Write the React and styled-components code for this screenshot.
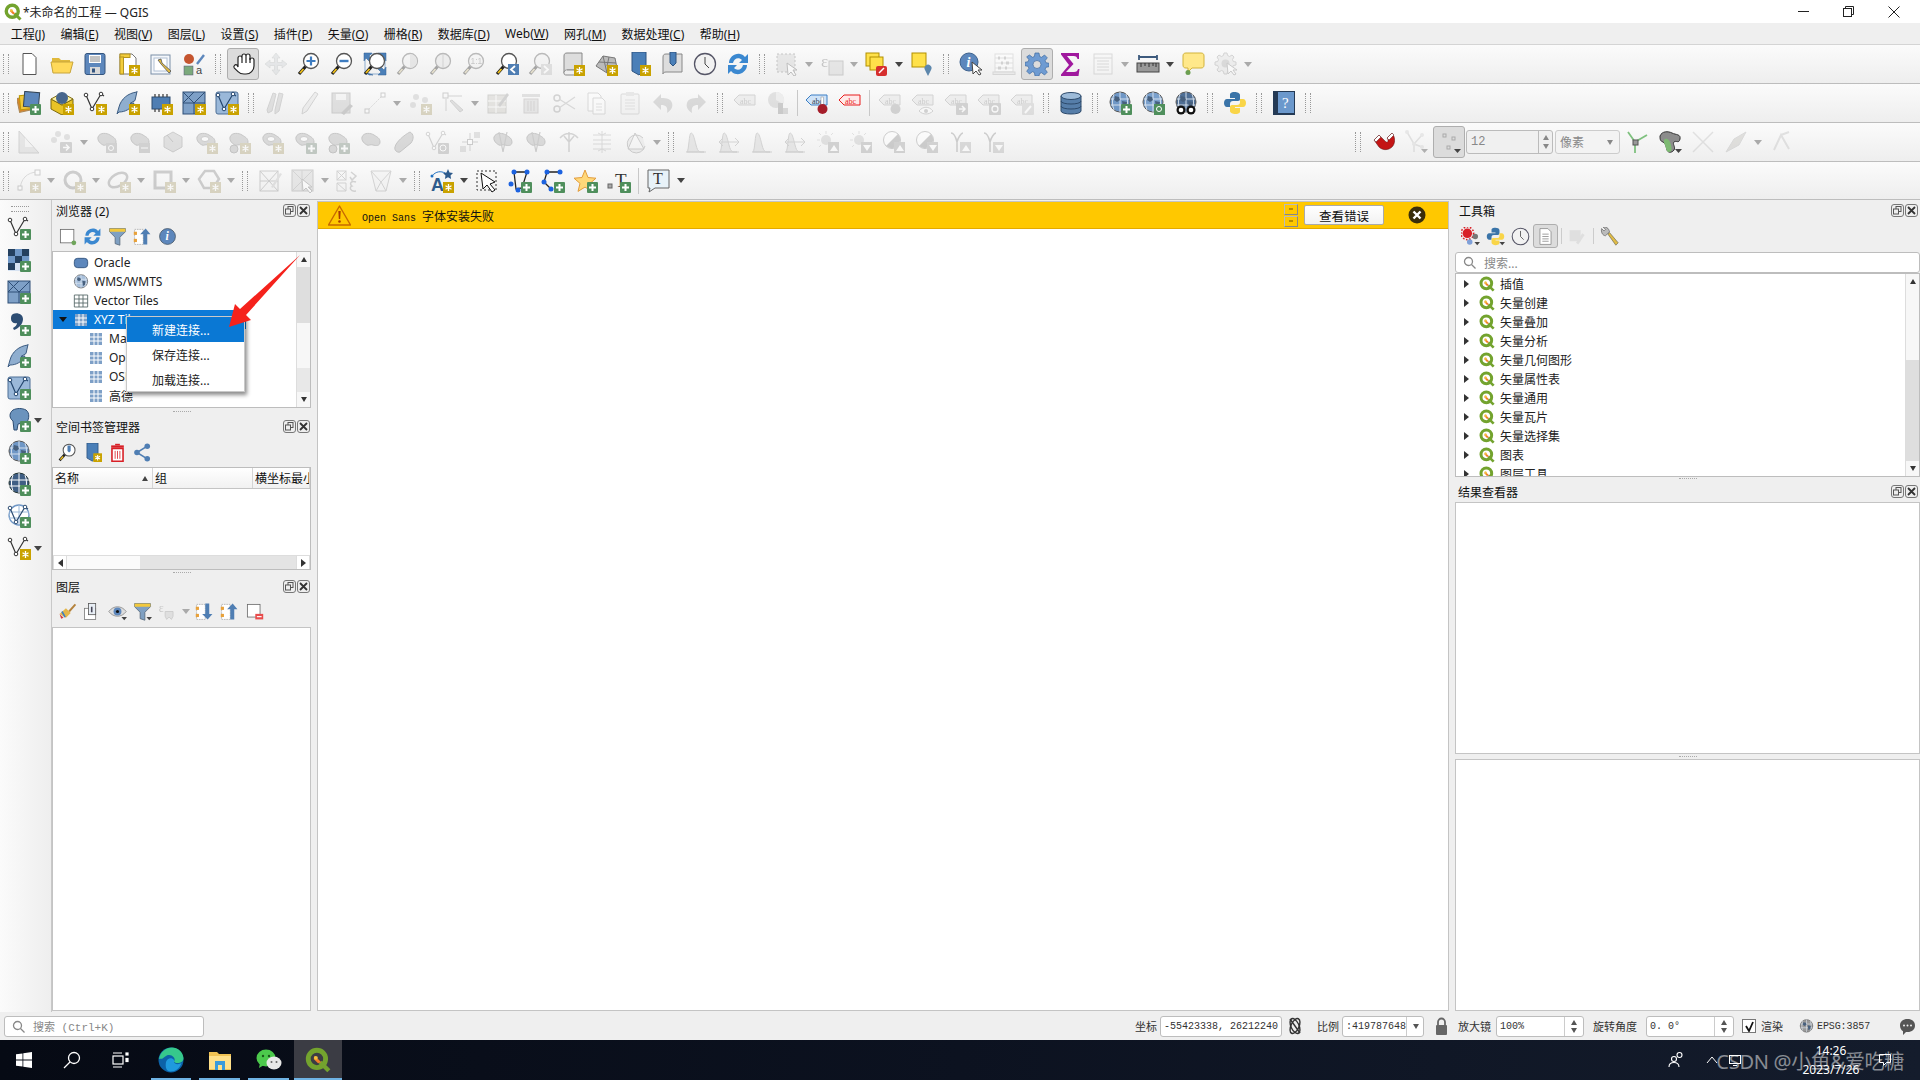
import styled, { createGlobalStyle } from 'styled-components'

const Global = createGlobalStyle`
  html, body { margin: 0; padding: 0; background: #efefef; overflow: hidden; }
  body { font-family: "Noto Sans", "Noto Sans CJK SC", sans-serif; font-size: 12px; color: #111; }
  * { box-sizing: border-box; }
`

const Lens = ({ fill = '#fff', children }) => (
  <>
    <line x1="9" y1="14" x2="2" y2="22" stroke="#222" strokeWidth="3.2" />
    <line x1="6.5" y1="17" x2="3" y2="21" stroke="#f2c21a" strokeWidth="1.8" />
    <circle cx="14" cy="9" r="7.5" fill={fill} stroke="#555" strokeWidth="1.3" />
    {children}
  </>
)
const Globe = ({ c = '#6f97c6' }) => (
  <>
    <circle cx="12" cy="11" r="10" fill={c} stroke="#555" />
    <path d="M2.5 8h19M2.5 14h19M12 1v20M6 3c-2 5-2 11 0 16M18 3c2 5 2 11 0 16" fill="none" stroke="#dfe8f2" strokeWidth=".9" />
    <path d="M7 5l4 1 1 3-3 2-3-2zM14 10l5 1-1 5-3 2z" fill="#47607e" />
  </>
)
const Blob = ({ c = '#aaa' }) => <path d="M3 7c2-5 9-4 12-2s6 3 6 7-4 4-7 3-4 1-6 0-6-4-5-8z" fill={c} stroke="#777" />
const Tag = ({ c = '#ddd', s = '#999', t = '#888' }) => (
  <>
    <path d="M1 9l5-5h16v10H6z" fill={c} stroke={s} />
    <text x="7" y="12.5" fontSize="8" fontFamily="Liberation Serif, serif" fill={t}>abc</text>
  </>
)
const Vee = ({ c = '#333' }) => (
  <>
    <path d="M3 4l6 14L18 3l3 2" fill="none" stroke={c} strokeWidth="1.2" />
    <circle cx="3" cy="4" r="1.8" fill="#fff" stroke={c} />
    <circle cx="9" cy="18" r="1.8" fill="#fff" stroke={c} />
    <circle cx="18" cy="3" r="1.8" fill="#fff" stroke={c} />
  </>
)
const Hist = () => <path d="M2 22h20M3 22c2-2 2-19 4-19s3 4 5 12 4 7 8 7z" fill="#ccc" stroke="#999" />
const Bub = ({ up }) => <path d={up ? 'M14 21l4-6 4 6z' : 'M14 15l4 6 4-6z'} fill="#fff" />

const S = {
  doc: <path d="M6 1.5h9l4 4v17H6z" fill="#fff" stroke="#555" />,
  folder: <><path d="M2 6h7l2 2h9v3H2z" fill="#e0b93c" /><path d="M1 10h22l-3 11H3z" fill="#ffd95a" stroke="#c8a53a" /></>,
  save: <><rect x="2" y="1.5" width="20" height="21" rx="2" fill="#5d87bc" stroke="#34557f" /><rect x="6" y="3" width="12" height="8" fill="#fff" /><path d="M7 5h10M7 7h10M7 9h10" stroke="#888" /><rect x="7" y="15" width="10" height="7" fill="#d9d9d9" /><rect x="9" y="16.5" width="3" height="4" fill="#34557f" /></>,
  layout: <><path d="M4 2h12l4 4v16H4z" fill="#fff" stroke="#777" /><rect x="4" y="2" width="10" height="3.5" fill="#f2cd3c" stroke="#b5941f" /><rect x="4" y="5" width="3.5" height="17" fill="#f2cd3c" stroke="#b5941f" /></>,
  props: <><rect x="2" y="3" width="19" height="19" fill="#f4f7fb" stroke="#7b8fa8" /><rect x="5" y="6" width="13" height="13" fill="#fff" stroke="#b0c0d4" /><path d="M9 8l3 4 8 9 2-2-9-8-1-4z" fill="#e4bd41" stroke="#555" strokeWidth=".8" /></>,
  style: <><circle cx="7" cy="7" r="5" fill="#c5552f" /><path d="M15 12l7-9" stroke="#5d87bc" strokeWidth="2.4" /><rect x="2" y="14" width="9" height="9" fill="#7ba97c" stroke="#557" strokeWidth=".5" /><text x="14" y="22" fontSize="11" fontFamily="Liberation Sans, sans-serif" fill="#444">a</text></>,
  hand: <g transform="translate(1 0)" fill="#fff" stroke="#222" strokeWidth="1.2"><path d="M18 8a2 2 0 1 1 4 0v6a8 8 0 0 1-8 8h-2c-2.8 0-4.5-.86-5.99-2.34l-3.6-3.6a2 2 0 0 1 2.83-2.82L6 15V6a2 2 0 1 1 4 0V4a2 2 0 1 1 4 0 2 2 0 1 1 4 0z" /><path d="M10 6v5M14 4v7M18 6v5" fill="none" /></g>,
  panmap: <path d="M12 1l4 5h-2.5v4.5H18V8l5 4-5 4v-2.5h-4.500V18H16l-4 5-4-5h2.500v-4.500H6V16l-5-4 5-4v2.500h4.500V6H8z" fill="#c3d0da" stroke="#9aa" strokeWidth=".6" />,
  zoomin: <Lens><path d="M14 4.500v9M9.500 9h9" stroke="#3e7cc0" strokeWidth="2.200" /></Lens>,
  zoomout: <Lens><path d="M9.500 9h9" stroke="#3e7cc0" strokeWidth="2.400" /></Lens>,
  full: <><path d="M1 1h8L6 4l3 3-3 2-3-3-2 3zM23 1h-8l3 3-3 3 3 2 3-3 2 3zM23 23h-8l3-3-3-3 3-2 3 3 2-3zM10 23H6l-2-2z" fill="#4a7fb8" stroke="#2d5b8e" strokeWidth=".5" /><rect x="2" y="2" width="20" height="20" fill="none" stroke="#4a7fb8" strokeWidth=".6" /><Lens fill="#fff" /></>,
  zoomsel: <Lens fill="#eee"><path d="M14 2a7 7 0 0 1 0 14z" fill="#ccc" /></Lens>,
  zoomlayer: <Lens fill="#ddd"><path d="M14 2v14" stroke="#999" /></Lens>,
  zoomone: <Lens fill="#eee"><text x="8.500" y="12" fontSize="8.500" fontFamily="Liberation Sans, sans-serif" fill="#777">1:1</text></Lens>,
  zoomlast: <><Lens fill="#fff" /><rect x="13" y="12" width="11" height="11" fill="#4f7eb3" /><path d="M20 14l-4 3.500 4 3.500" fill="none" stroke="#fff" strokeWidth="1.800" /></>,
  zoomnext: <><Lens fill="#eee" /><rect x="13" y="12" width="11" height="11" fill="#bbb" /><path d="M16 14l4 3.500-4 3.500" fill="none" stroke="#fff" strokeWidth="1.800" /></>,
  map: <><path d="M6 1h15v17H6c-2 0-3 1-3 3V4c0-2 1-3 3-3z" fill="#ddd" stroke="#888" /><path d="M3 21c0 2 1 2 3 2h13v-5H6" fill="#eee" stroke="#888" /></>,
  map3d: <path d="M2 14L9 4l12 2 2 10-10 5zM9 4l4 17M5 10l17 1M15 5l-2 9" fill="#bbb" stroke="#777" />,
  bookmark: <path d="M5 0h14v16l-7 7-7-4z" fill="#4a7fb8" stroke="#2e5480" />,
  bookshow: <><path d="M6 2h16v18H6c-2 0-3 1-3 2V5c0-2 1-3 3-3z" fill="#ddd" stroke="#888" /><path d="M10 0h6v11l-3 3-3-3z" fill="#4a7fb8" stroke="#2e5480" /></>,
  clock: <><circle cx="12" cy="12" r="10.500" fill="#f2f2f2" stroke="#556" strokeWidth="1.300" /><path d="M12 5v7l4 4" fill="none" stroke="#444" /></>,
  refresh: <><path d="M3 11C3 5 9 1 14 2c3 .5 4 2 5 3l3-3v9h-9l3-3c-3-3-8-2-9 3z" fill="#3b88d0" /><path d="M21 13c0 6-6 10-11 9-3-.5-4-2-5-3l-3 3v-9h9l-3 3c3 3 8 2 9-3z" fill="#3b88d0" /></>,
  select: <><rect x="2" y="2" width="18" height="18" fill="#ccc" stroke="#777" strokeDasharray="2 2" /><path d="M12 11l1 12 3-3 3 4 2-1-3-5h4z" fill="#fff" stroke="#666" /></>,
  expr: <><rect x="9" y="9" width="14" height="14" fill="#ccc" stroke="#888" /><text x="1" y="15" fontSize="17" fontFamily="Liberation Serif, serif" fill="#777">ε</text></>,
  deselect: <><rect x="1" y="1" width="13" height="13" fill="#ffe14a" stroke="#b28f00" /><rect x="5" y="5" width="13" height="13" fill="#ffe14a" stroke="#b28f00" /><rect x="11" y="14" width="11" height="10" rx="2" fill="#d62f2f" /><path d="M14 21l5-5" stroke="#fff" strokeWidth="1.500" /></>,
  yellowpin: <><rect x="2" y="1" width="14" height="14" fill="#ffe14a" stroke="#b28f00" /><path d="M18 24l-3-6a3.500 3.500 0 1 1 6 0z" fill="#5d87ac" /></>,
  identify: <><circle cx="10" cy="10" r="9" fill="#5d87bc" stroke="#3d618d" /><text x="7.500" y="15" fontSize="14" fontStyle="italic" fontFamily="Liberation Serif, serif" fontWeight="700" fill="#fff">i</text><path d="M13 10l1 12 3-3 3 4 2-1-3-4h4z" fill="#fff" stroke="#444" /></>,
  abacus: <><rect x="3" y="2" width="18" height="18" fill="#fff" stroke="#bbb" /><path d="M3 6h18M3 11h18M3 16h18" stroke="#bbb" /><path d="M6 6h2M12 6h2M9 11h2M14 11h3M6 16h3M13 16h2" stroke="#999" strokeWidth="3" /><rect x="1" y="20" width="22" height="2.500" fill="#ddd" stroke="#aaa" /></>,
  gear: <path fillRule="evenodd" d="M10 1h4l.6 3.500 2 .8L19.500 3l2.800 2.800-2.200 2.900.8 2 3.100.6v3.400l-3.100.6-.8 2 2.200 2.900-2.800 2.800-2.900-2.300-2 .8L14 24h-4l-.6-3.500-2-.8L4.500 22l-2.800-2.800 2.200-2.900-.8-2-3.100-.6v-3.400l3.100-.6.8-2-2.200-2.900L4.500 3l2.900 2.300 2-.8zM12 8.500a4 4 0 1 0 0 8 4 4 0 0 0 0-8z" fill="#6e9bd2" stroke="#3e6aa0" strokeWidth=".7" />,
  sigma: <path d="M3 1h18v6h-1.500c-.5-2-1.500-3-4-3H9l6.500 8L8 20h8c2.500 0 3.500-1 4-3H21.500l-1 7H3v-1.500L11 13 3 2.500z" fill="#a0199e" />,
  table: <><rect x="3" y="2" width="18" height="20" fill="#f5f5f5" stroke="#aaa" /><path d="M3 6h18M6 9h12M6 12h12M6 15h12M6 18h12" stroke="#aaa" /></>,
  measure: <><path d="M3 3v5M21 3v5M3 5h18" stroke="#3d5a7d" strokeWidth="1.800" /><rect x="1" y="11" width="22" height="9" fill="#999" stroke="#444" /><path d="M5 11v4M9 11v3M13 11v4M17 11v3M20 11v4" stroke="#333" /></>,
  tip: <><path d="M5 1h15c2 0 3 1 3 3v9c0 2-1 3-3 3H11l-4 4v-4H5c-2 0-3-1-3-3V4c0-2 1-3 3-3z" fill="#ffe88a" stroke="#d2b33b" /><circle cx="7" cy="20.500" r="2.500" fill="#6b9e50" /></>,
  gearcur: <><path d="M10 1h3l.6 2.500 2 1L18 3l2 2-1.500 2.500.8 2 2.700.5v3l-2.700.5-.8 2L20 18l-2 2-2.400-1.500-2 .8-.6 2.700h-3l-.6-2.700-2-.8L5 20l-2-2 1.500-2.500-.8-2L1 13v-3l2.700-.5.8-2L3 5l2-2 2.400 1.500 2-1z" fill="#ddd" stroke="#999" /><circle cx="11.500" cy="11.500" r="4" fill="#aaa" /><path d="M13 11l1 11 3-3 3 4 2-1-3-4h4z" fill="#fff" stroke="#888" /></>,
  addlayer: <><rect x="1" y="6" width="14" height="14" transform="rotate(-12 8 13)" fill="#d8862e" stroke="#a85" /><rect x="3" y="4" width="14" height="14" transform="rotate(-6 10 11)" fill="#f2c83c" stroke="#b90" /><rect x="7" y="1" width="15" height="15" transform="rotate(5 14 9)" fill="#5d87bc" stroke="#345" /></>,
  gpkg: <><path d="M1 8l11 6 11-6v10l-11 6-11-6z" fill="#e8c326" stroke="#7d6a10" /><path d="M1 8l11-6 11 6-11 6z" fill="#fff3a4" stroke="#7d6a10" /><circle cx="12" cy="7" r="6" fill="#47668d" /></>,
  vnew: <Vee />,
  feather: <path d="M21 1C12 2 5 8 3 16l-2 7 2-2c6 0 12-3 15-9l-4 .5 5-3 2-9z" fill="#8faecf" stroke="#3c5c82" />,
  chip: <><rect x="3" y="6" width="18" height="12" fill="#4f7eb3" stroke="#2c4a6e" /><path d="M6 3v3M10 3v3M14 3v3M18 3v3M6 18v3M10 18v3M14 18v3M18 18v3" stroke="#444" strokeWidth="1.300" /></>,
  mesh: <><rect x="1" y="1" width="22" height="22" fill="#7ea0c7" stroke="#2f4f76" /><path d="M1 1l11 11L23 1M1 12h22M12 12v11M1 12L12 1" fill="none" stroke="#2f4f76" /></>,
  vtile: <><rect x="1" y="1" width="22" height="22" rx="2" fill="#9ab8d9" stroke="#4d6f96" /><Vee c="#24466e" /></>,
  pencils: <path d="M9 2l3 1-4 17-4 2-1-3zM15 2l4 1-4 17-4 3v-4z" fill="#bbb" stroke="#999" />,
  pencil: <path d="M18 1l3 2L10 20l-5 3 1-6z" fill="#ddd" stroke="#999" />,
  saveedit: <><rect x="2" y="2" width="18" height="20" fill="#bbb" stroke="#888" /><rect x="6" y="3" width="10" height="6" fill="#eee" /><path d="M11 22l9-9 3 2-9 9z" fill="#888" /></>,
  line: <><path d="M4 20L20 4" stroke="#aaa" strokeDasharray="2 1" /><rect x="2" y="18" width="4" height="4" fill="#fff" stroke="#888" /><rect x="18" y="2" width="4" height="4" fill="#fff" stroke="#888" /></>,
  points: <><circle cx="8" cy="6" r="3" fill="#bbb" /><circle cx="17" cy="9" r="3" fill="#bbb" /><circle cx="5" cy="14" r="3" fill="#bbb" /></>,
  nodetool: <><rect x="2" y="2" width="5" height="5" fill="none" stroke="#888" /><path d="M7 5h14M5 8v12M9 10l10 11 3-2-11-10z" fill="#bbb" stroke="#999" /></>,
  tableedit: <><rect x="2" y="4" width="18" height="18" fill="#ccc5ad" stroke="#998" /><path d="M2 10h18M2 16h18M10 4v18" stroke="#fff" /><path d="M12 14L21 2l2 2-9 12z" fill="#999" /></>,
  trash: <><rect x="3" y="3" width="18" height="3" fill="#bbb" /><rect x="5" y="8" width="14" height="14" fill="#ccc" stroke="#a99" /><path d="M9 10v10M12 10v10M15 10v10" stroke="#a99" /></>,
  scissors: <><circle cx="5" cy="18" r="3" fill="none" stroke="#999" strokeWidth="1.500" /><circle cx="5" cy="7" r="3" fill="none" stroke="#999" strokeWidth="1.500" /><path d="M7 8l16 10M7 17L23 6" stroke="#aaa" strokeWidth="1.300" /></>,
  copy: <><path d="M3 2h10l3 3v15H3z" fill="#fff" stroke="#aaa" /><path d="M8 7h9l3 3v13H8z" fill="#fff" stroke="#aaa" /><path d="M11 13h6M11 16h6M11 19h6" stroke="#bbb" /></>,
  paste: <><rect x="3" y="3" width="18" height="20" rx="1" fill="#eee" stroke="#aaa" /><rect x="8" y="1" width="8" height="4" fill="#ccc" /><path d="M7 9h10M7 12h10M7 15h10M7 18h10" stroke="#bbb" /></>,
  undo: <path d="M10 3L2 11l8 8v-5c5 0 7 2 6 8 5-3 6-7 5-10-1-4-5-5-11-5z" fill="#aaa" />,
  redo: <path d="M14 3l8 8-8 8v-5c-5 0-7 2-6 8-5-3-6-7-5-10 1-4 5-5 11-5z" fill="#aaa" />,
  abc: <Tag />,
  pie: <><circle cx="10" cy="9" r="8" fill="#bbb" /><path d="M10 1v8l7 4A8 8 0 0 0 10 1z" fill="#ddd" /><rect x="12" y="12" width="5" height="11" fill="#888" /><rect x="17" y="17" width="5" height="6" fill="#aaa" /></>,
  labelpin: <><Tag c="#cfe3f8" s="#3c7fc4" t="#345" /><rect x="16" y="6" width="2.500" height="10" fill="#fff" stroke="#888" strokeWidth=".5" /><circle cx="17.500" cy="18" r="5" fill="#a51d2a" /></>,
  labelred: <Tag c="#ffe9e9" s="#e81d1d" t="#e81d1d" />,
  abcpin: <><Tag /><circle cx="17.500" cy="18" r="5" fill="#999" /></>,
  abceye: <><Tag /><path d="M8 20c4-5 10-5 14 0-4 4-10 4-14 0z" fill="#fff" stroke="#999" /><circle cx="15" cy="20" r="2" fill="#999" /></>,
  abcmove: <><Tag /><rect x="12" y="12" width="12" height="12" rx="1" fill="#999" /><path d="M15 18h6M18 15l3 3-3 3" stroke="#fff" fill="none" strokeWidth="1.500" /></>,
  abcrot: <><Tag /><rect x="12" y="12" width="12" height="12" rx="1" fill="#999" /><circle cx="18" cy="18" r="3" fill="none" stroke="#fff" strokeWidth="1.300" /></>,
  abcedit: <><Tag /><rect x="12" y="12" width="12" height="12" rx="1" fill="#bbb" /><path d="M15 22l6-7" stroke="#fff" strokeWidth="2" /></>,
  db: <><path d="M2 5v15c0 4 20 4 20 0V5z" fill="#567ea9" stroke="#2d4a6b" /><ellipse cx="12" cy="5" rx="10" ry="3.500" fill="#9dbbd9" stroke="#2d4a6b" /><path d="M2 10c0 4 20 4 20 0M2 15c0 4 20 4 20 0" fill="none" stroke="#2d4a6b" /></>,
  globe: <Globe />,
  globe2: <Globe c="#7aa0cc" />,
  globedark: <><Globe c="#4f6f96" /><circle cx="7" cy="19" r="4.500" fill="#111" /><circle cx="17" cy="19" r="4.500" fill="#111" /><circle cx="7" cy="19" r="2.300" fill="#fff" /><circle cx="17" cy="19" r="2.300" fill="#fff" /></>,
  python: <><path d="M12 1c-5 0-5 2-5 3v3h5v1H4c-2 0-3 2-3 4s1 4 3 4h3v-3c0-2 1-3 3-3h5c1.500 0 2-1 2-2V4c0-2-3-3-5-3z" fill="#3a74a8" /><path d="M12 23c5 0 5-2 5-3v-3h-5v-1h8c2 0 3-2 3-4s-1-4-3-4h-3v3c0 2-1 3-3 3H9c-1.500 0-2 1-2 2v4c0 2 3 3 5 3z" fill="#f9d548" /></>,
  help: <><rect x="1" y="0" width="22" height="24" fill="#243a55" /><rect x="6" y="1" width="16" height="21" fill="#6b98cc" /><text x="10" y="17" fontSize="15" fontFamily="Liberation Serif, serif" fill="#fff">?</text></>,
  ruler: <><path d="M2 23V1l20 22z" fill="#ccc" stroke="#999" /><path d="M16 17l-8-9v9z" fill="#f1f1f1" /></>,
  ptsmove: <><circle cx="8" cy="4" r="3" fill="#bbb" /><circle cx="17" cy="7" r="3" fill="#bbb" /><circle cx="4" cy="10" r="3" fill="#bbb" /><rect x="10" y="12" width="12" height="11" rx="1" fill="#999" /><path d="M13 17.500h6M16 14.500l3 3-3 3" stroke="#fff" fill="none" strokeWidth="1.500" /></>,
  blobrot: <><Blob /><rect x="11" y="13" width="11" height="10" fill="#999" /><circle cx="16" cy="18" r="2.500" fill="none" stroke="#fff" /></>,
  blobmove: <><Blob /><rect x="11" y="13" width="11" height="10" fill="#999" /><path d="M13 18h7" stroke="#fff" /></>,
  hex: <><path d="M12 2l9 5v10l-9 5-9-5V7z" fill="#bbb" stroke="#888" /><path d="M12 12l-6-7" stroke="#777" /></>,
  ringhole: <><Blob /><ellipse cx="11" cy="9" rx="4" ry="2.500" fill="#fff" stroke="#888" /></>,
  twoblob: <><Blob /><circle cx="7" cy="19" r="4" fill="#aaa" stroke="#777" /></>,
  blob: <Blob />,
  blobfill: <path d="M18 2c4 2 4 7 1 11L8 22c-3 1-6-2-5-5 1-5 9-12 15-15z" fill="#aaa" stroke="#777" />,
  vrot: <><Vee c="#999" /><rect x="13" y="13" width="11" height="11" rx="1" fill="#999" /><circle cx="18" cy="18" r="3" fill="none" stroke="#fff" /></>,
  split: <><path d="M4 12h16M12 3v18" stroke="#999" /><rect x="9.500" y="9.500" width="5" height="5" fill="#fff" stroke="#888" /><rect x="16" y="2" width="6" height="6" fill="#bbb" /><rect x="2" y="16" width="6" height="6" fill="#bbb" /></>,
  sciss: <><Blob /><path d="M8 2l4 20M16 2l-4 20" stroke="#888" strokeWidth="1.200" /></>,
  scissline: <path d="M3 8c5-6 13-6 18 0M12 2v20M7 6l5 6M17 6l-5 6" fill="none" stroke="#999" strokeWidth="1.500" />,
  merge: <path d="M3 5h18M3 10h18M3 14h18M3 19h18M12 1v22M8 3l4 2 4-2M8 21l4-2 4 2" fill="none" stroke="#aaa" />,
  rotcirc: <path d="M12 3l9 16H5zM20 8a9 9 0 1 0 2 8" fill="#ddd" stroke="#888" />,
  hist: <Hist />,
  hist2: <><Hist /><path d="M2 12h20M6 8l-4 4 4 4M18 8l4 4-4 4" fill="none" stroke="#999" /></>,
  sunup: <><circle cx="10" cy="10" r="5" fill="#bbb" /><path d="M10 1v3M1 10h3M3 3l2 2M17 3l-2 2M3 17l2-2" stroke="#bbb" /><rect x="12" y="12" width="11" height="11" fill="#999" /><Bub up /></>,
  sundown: <><circle cx="10" cy="10" r="5" fill="#bbb" /><path d="M10 1v3M1 10h3M3 3l2 2M17 3l-2 2M3 17l2-2" stroke="#bbb" /><rect x="12" y="12" width="11" height="11" fill="#999" /><Bub /></>,
  contup: <><circle cx="10" cy="10" r="8.500" fill="#fff" stroke="#888" /><path d="M16 4A8.500 8.500 0 0 1 4 16z" fill="#888" /><rect x="12" y="12" width="11" height="11" fill="#999" /><Bub up /></>,
  contdown: <><circle cx="10" cy="10" r="8.500" fill="#fff" stroke="#888" /><path d="M16 4A8.500 8.500 0 0 1 4 16z" fill="#888" /><rect x="12" y="12" width="11" height="11" fill="#999" /><Bub /></>,
  gamup: <><path d="M3 3c3 0 5 5 6 9v10M15 3c-2 0-5 5-6 9" fill="none" stroke="#888" strokeWidth="1.500" /><rect x="12" y="12" width="11" height="11" fill="#aaa" /><Bub up /></>,
  gamdown: <><path d="M3 3c3 0 5 5 6 9v10M15 3c-2 0-5 5-6 9" fill="none" stroke="#888" strokeWidth="1.500" /><rect x="12" y="12" width="11" height="11" fill="#aaa" /><Bub /></>,
  magnet: <><path d="M3 10l5-5 6 6c2 2 3 1 3 0s0-2-1-3l5-5c4 5 3 11 0 14s-9 4-13 0z" fill="#c41515" stroke="#511" strokeWidth=".5" /><path d="M3 10l5-5 2 2-5 5zM16 8l5-5 2 2-5 5z" fill="#fff" stroke="#511" strokeWidth=".5" /></>,
  snap: <><path d="M3 2l7 12 8-9M10 14l8 3M10 14v8" fill="none" stroke="#bbb" strokeWidth="1.500" /><circle cx="3" cy="2" r="2" fill="#ccc" /><circle cx="18" cy="5" r="2" fill="#ccc" /><circle cx="18" cy="17" r="2" fill="#ccc" /><circle cx="10" cy="14" r="2" fill="#ccc" /></>,
  snapdots: <><rect x="6" y="4" width="3" height="3" fill="none" stroke="#aaa" /><rect x="15" y="7" width="3" height="3" fill="none" stroke="#aaa" /><rect x="10" y="16" width="3" height="3" fill="none" stroke="#aaa" /></>,
  trace: <><path d="M3 2l7 10M22 5l-12 7M10 12v11" stroke="#7fc17f" strokeWidth="1.800" /><rect x="8" y="10" width="5" height="5" fill="#999" stroke="#555" /></>,
  tracefill: <><path d="M2 6c2-5 8-5 12-3s9 1 8 6-4 1-6 3 2 5 0 8-6 3-7 0-1-7-4-8-3-3-3-6z" fill="#8c8c8c" stroke="#333" /><path d="M7 9c3-1 5 2 6 6s1 7-2 7-3-5-4-7-2-5 0-6z" fill="#7dba72" /></>,
  cross: <path d="M2 2l20 20M22 2L2 22" stroke="#bbb" strokeWidth="1.500" />,
  crossfill: <path d="M2 22L10 9 22 2l-7 13z" fill="#bdb8a4" stroke="#aaa" />,
  nodeline: <path d="M5 20L12 5l8 14M12 5l8-3" fill="none" stroke="#bbb" strokeWidth="2" />,
  curve: <><path d="M3 22C3 10 10 3 21 3" fill="none" stroke="#aaa" /><rect x="1" y="17" width="4" height="4" fill="#fff" stroke="#888" /><rect x="18" y="1" width="5" height="5" fill="#fff" stroke="#888" /></>,
  circ: <circle cx="11" cy="11" r="8" fill="none" stroke="#888" strokeWidth="3" />,
  ell: <ellipse cx="11" cy="11" rx="10" ry="6" fill="none" stroke="#888" strokeWidth="2.500" transform="rotate(-30 11 11)" />,
  rect: <rect x="3" y="3" width="16" height="16" fill="none" stroke="#888" strokeWidth="3" />,
  poly: <path d="M8 2h9l5 8-6 9H7L2 10z" fill="none" stroke="#888" strokeWidth="2.500" />,
  meshedit: <><rect x="2" y="2" width="18" height="20" fill="#eee" stroke="#888" /><path d="M2 2l18 20M20 2L2 22M2 12h18" stroke="#888" /><path d="M13 18L22 4l2 1-9 14z" fill="#bbb" /></>,
  meshsel: <><rect x="1" y="1" width="21" height="21" fill="#ccc" stroke="#888" /><path d="M1 1l21 21M22 1L1 22M11 1v21" stroke="#999" /><path d="M11 10l1 12 3-3 4 5 2-2-4-4h4z" fill="#fff" stroke="#777" /></>,
  meshexpr: <><rect x="1" y="2" width="9" height="9" fill="none" stroke="#999" /><path d="M1 2l9 9M10 2l-9 9M1 14h9v8H1zM1 14l9 8" fill="none" stroke="#999" /><path d="M15 3l5 4-4 4-2-3M20 13c-5-2-7 2-4 4-3 1-2 6 4 5" fill="none" stroke="#999" strokeWidth="1.500" /></>,
  tin: <path d="M2 2l5 20h10l5-20zM2 2l10 11 10-11M7 22l5-9 5 9" fill="#eee" stroke="#999" />,
  label: <><path d="M2 7c4-5 9-5 13-3" fill="none" stroke="#1f6fc0" /><circle cx="2" cy="7" r="1.500" fill="#1f6fc0" /><text x="1" y="22" fontSize="18" fontWeight="700" fontFamily="Liberation Sans, sans-serif" fill="#2e5b8c">A</text><path d="M18 0l1.500 3.500 3.500.5-2.500 2.500.6 3.500-3.100-1.700-3.100 1.700.6-3.500L13 4l3.500-.5z" fill="#2e5b8c" /></>,
  cursorbox: <><rect x="2" y="2" width="19" height="19" fill="none" stroke="#333" strokeDasharray="2 2" /><path d="M6 4l2 16 4-4 5 7 3-2-5-6 5-2z" fill="#fff" stroke="#111" /></>,
  polyadd: <><path d="M6 3h13l-5 16-6 1z" fill="none" stroke="#222" strokeWidth="1.300" /><circle cx="6" cy="3" r="2.500" fill="#1c62e0" /><circle cx="19" cy="3" r="2.500" fill="#1c62e0" /><circle cx="3" cy="15" r="2.500" fill="#1c62e0" /><circle cx="10" cy="21" r="2.500" fill="#1c62e0" /></>,
  lineadd: <><path d="M6 3h13M6 3L3 13l7 7" fill="none" stroke="#222" strokeWidth="1.300" /><circle cx="6" cy="3" r="2.500" fill="#1c62e0" /><circle cx="19" cy="3" r="2.500" fill="#1c62e0" /><circle cx="3" cy="13" r="2.500" fill="#1c62e0" /><circle cx="10" cy="20" r="2.500" fill="#1c62e0" /></>,
  staradd: <path d="M11 1l3 7.500 8 .7-6 5.200 2 8-7-4.300-7 4.300 2-8-6-5.200 8-.7z" fill="#ffd87a" stroke="#e39d3c" />,
  textadd: <><text x="8" y="18" fontSize="19" fontFamily="Liberation Serif, serif" fill="#333">T</text><rect x="1" y="15" width="4" height="4" fill="#aaa" stroke="#666" /></>,
  callout: <><path d="M2 1h21v18H9l-6 4 1-4H2z" fill="#e8f2f8" stroke="#666" /><text x="7" y="15" fontSize="16" fontFamily="Liberation Serif, serif" fill="#333">T</text></>,
  raster: <><rect x="1" y="1" width="22" height="22" fill="#d7e3f2" /><path d="M1 1h7v7H1zM8 8h7v7H8zM15 1h7v7h-7zM1 15h7v7H1z" fill="#24405f" /><path d="M8 1h7v7H8zM1 8h7v7H1zM15 8h7v7h-7z" fill="#6f97c6" /></>,
  comma: <path d="M6 2c4-2 10 0 10 5 0 5-4 9-9 11l-1-2c2-1 4-3 4-5-3 1-6-1-6-4 0-2 0-4 2-5z" fill="#2d4d73" />,
  pg: <path d="M6 2c4-2 9-2 13 0 4 3 3 9 1 12l-1 7h-3l-1-6-4 1-1 6H7l-1-9C2 10 2 5 6 2z" fill="#6b93bd" stroke="#2d4d73" />,
  wfs: <><circle cx="12" cy="11" r="10" fill="#fff" stroke="#6f97c6" strokeWidth="1.300" /><path d="M2 8h20M2 14h20M12 1v20" stroke="#9ab8d9" /><Vee c="#2d4d73" /></>,
  globegrid: <><circle cx="12" cy="11" r="10" fill="#3f5e84" stroke="#233" /><path d="M2 8h20M2 14h20M12 1v20M6 3c-2 5-2 11 0 16M18 3c2 5 2 11 0 16" fill="none" stroke="#fff" /></>,
  boxadd: <><rect x="3" y="3" width="17" height="17" fill="#fff" stroke="#666" /><circle cx="20" cy="20" r="3" fill="#6fa55a" /></>,
  funnel: <><path d="M2 2h20v4l-7 7v10l-6-2v-8L2 6z" fill="#7fa0c2" stroke="#567" /><path d="M2 2h20v4H2z" fill="#f2c83c" /></>,
  collapse: <><rect x="2" y="3" width="11" height="19" fill="#fff" stroke="#aaa" strokeDasharray="2 1" /><rect x="1" y="6" width="4" height="4" fill="#e8a13a" /><rect x="1" y="15" width="4" height="4" fill="#e8a13a" /><path d="M16 2l6 7h-4v13h-5V9H9z" fill="#4f7eb3" /></>,
  expand: <><rect x="2" y="3" width="11" height="19" fill="#fff" stroke="#aaa" strokeDasharray="2 1" /><rect x="1" y="6" width="4" height="4" fill="#e8a13a" /><rect x="1" y="15" width="4" height="4" fill="#e8a13a" /><path d="M16 22l6-7h-4V2h-5v13H9z" fill="#4f7eb3" /></>,
  info: <><circle cx="12" cy="12" r="10" fill="#5d87bc" stroke="#456" /><text x="9.500" y="17" fontSize="15" fontStyle="italic" fontWeight="700" fontFamily="Liberation Serif, serif" fill="#fff">i</text></>,
  lensbm: <Lens fill="#fff"><path d="M12 3h4v7l-2 2-2-2z" fill="#4f7eb3" /></Lens>,
  trashred: <><rect x="4" y="3" width="16" height="3" fill="#d81f26" /><rect x="9" y="1" width="6" height="2" fill="#d81f26" /><path d="M5 7h14v16H5z" fill="#fff" stroke="#d81f26" strokeWidth="2" /><path d="M9 10v10M12 10v10M15 10v10" stroke="#d81f26" /></>,
  share: <><path d="M18 4L5 12l13 8" fill="none" stroke="#4f7eb3" strokeWidth="2" /><circle cx="18" cy="4" r="3.500" fill="#4f7eb3" /><circle cx="5" cy="12" r="3.500" fill="#4f7eb3" /><circle cx="18" cy="20" r="3.500" fill="#4f7eb3" /></>,
  broom: <><path d="M14 12L22 3" stroke="#b4823c" strokeWidth="2.400" /><path d="M2 15l8-7 6 6-6 6z" fill="#e3b64a" /><path d="M2 15l5 5-3 1z" fill="#d43c3c" /><path d="M5 12l4 7" stroke="#3c7fc4" strokeWidth="2" /></>,
  clip: <><rect x="2" y="8" width="14" height="14" fill="#fff" stroke="#777" /><rect x="7" y="2" width="9" height="14" fill="#e8eef5" stroke="#555" /><path d="M11 6v7" stroke="#445" strokeWidth="2" /></>,
  eye: <><path d="M1 12c6-8 16-8 22 0-6 8-16 8-22 0z" fill="#ddd" stroke="#888" /><circle cx="12" cy="12" r="5" fill="#5d87bc" /><circle cx="12" cy="12" r="2" fill="#111" /></>,
  exprtooth: <><text x="1" y="13" fontSize="15" fontFamily="Liberation Serif, serif" fill="#999">ε</text><path d="M9 12h10v6l-2 4-3-3-3 3-2-4z" fill="#ccc" stroke="#999" /></>,
  boxminus: <><rect x="3" y="3" width="16" height="16" fill="#fff" stroke="#666" /><rect x="13" y="15" width="10" height="7" fill="#e84c4c" /><path d="M15 18.500h6" stroke="#fff" strokeWidth="1.500" /></>,
  gears: <><circle cx="8" cy="8" r="6" fill="#d81f26" /><circle cx="8" cy="8" r="8" fill="none" stroke="#d81f26" strokeDasharray="2 2" strokeWidth="2" /><circle cx="18" cy="12" r="3.500" fill="#777" /><circle cx="11" cy="19" r="3.500" fill="#7fa0d8" /></>,
  tbdoc: <><path d="M5 2h10l4 4v16H5z" fill="#fff" stroke="#888" /><path d="M8 9h8M8 12h8M8 15h8M8 18h8" stroke="#888" /></>,
  editoff: <><rect x="2" y="4" width="14" height="14" fill="#ccc" /><path d="M10 20l8-12 3 2-8 12z" fill="#ccc" /></>,
  wrench: <><path d="M10 9l2-2 11 13-3 3z" fill="#e0bb45" stroke="#665" strokeWidth=".8" /><path d="M2 2l3 3 2-2-3-3c3-1 7 1 8 6l-5 5C3 11 1 6 2 2z" fill="#bbb" stroke="#555" strokeWidth=".8" /></>,
  oracle: <rect x="2" y="5" width="20" height="14" rx="5" fill="#5d87bc" stroke="#34557f" strokeWidth="1.400" />,
  wmsglobe: <Globe c="#a8c0dc" />,
  tiles: <path d="M2 3h20v18H2zM2 9h20M2 15h20M9 3v18M15 3v18" fill="#fff" stroke="#566" strokeWidth="1.300" />,
  xyz: <><rect x="3" y="3" width="18" height="18" fill="#7ea0c7" /><path d="M3 9h18M3 15h18M9 3v18M15 3v18" stroke="#fff" strokeWidth="1.500" /></>,
}

const Badge = {
  star: <><rect x="13" y="13" width="11" height="11" fill="#c9a200" /><path d="M18.500 15v7M15.500 16.800l6 3.400M21.500 16.800l-6 3.400" stroke="#fff" strokeWidth="1.300" /></>,
  plus: <><rect x="13" y="13" width="11" height="11" rx="1" fill="#4f8f5c" /><path d="M18.500 15v7M15 18.500h7" stroke="#fff" strokeWidth="2" /></>,
  tri: <path d="M17 19h7l-3.500 4z" fill="#444" />,
  lens: <><rect x="13" y="13" width="11" height="11" fill="#4f8f5c" /><circle cx="18" cy="18" r="2.500" fill="none" stroke="#fff" /></>,
}

const Ico = ({ n, b, size = 24 }) => (
  <svg width={size} height={size} viewBox="0 0 24 24">
    {S[n]}
    {b && Badge[b]}
  </svg>
)

const Qgis = ({ size = 18 }) => (
  <svg width={size} height={size} viewBox="0 0 24 24">
    <circle cx="11" cy="11" r="8" fill="none" stroke="#73a32e" strokeWidth="4.500" />
    <path d="M14 14l8 8" stroke="#73a32e" strokeWidth="4" />
    <path d="M9 8l6 6-3 1-4-4z" fill="#ef7d28" />
    <circle cx="10" cy="10" r="1.800" fill="#f4c13c" />
  </svg>
)

const Shell = styled.div`
  width: 1920px;
  height: 1080px;
  display: flex;
  flex-direction: column;
  overflow: hidden;
  background: #efefef;
`
const TitleBar = styled.div`
  height: 23px;
  background: #fff;
  display: flex;
  align-items: center;
  padding-left: 4px;
`
const TitleText = styled.span`
  margin-left: 1px;
  color: #222;
`
const WinBtns = styled.div`
  margin-left: auto;
  display: flex;
  margin-right: 3px;
`
const WinBtn = styled.div`
  width: 45.5px;
  height: 23px;
  display: flex;
  align-items: center;
  justify-content: center;
`
const MenuBar = styled.div`
  height: 22px;
  padding-left: 3px;
  display: flex;
  align-items: center;
  background: #efefef;
  border-bottom: 1px solid #d4d4d4;
`
const MenuItem = styled.div`
  padding: 0 7.7px;
  white-space: nowrap;
`
const Row = styled.div`
  height: ${p => p.$h || 39}px;
  display: flex;
  align-items: center;
  background: linear-gradient(#fbfbfb, #eeeeee);
  border-bottom: 1.5px solid #bdbdbd;
`
const Grip = styled.div`
  flex: none;
  width: 16px;
  display: flex;
  justify-content: center;
  &:first-child { width: 12px; }
  &::before {
    content: '';
    width: 4px;
    height: 20px;
    border-left: 1px dotted #999;
    border-right: 1px dotted #999;
  }
`
const Btn = styled.div`
  flex: none;
  width: 32px;
  height: 32px;
  margin: 0 .5px;
  display: flex;
  align-items: center;
  justify-content: center;
  border-radius: 3px;
  background: ${p => (p.$on ? '#dcdcdc' : 'transparent')};
  border: 1px solid ${p => (p.$on ? '#aeaeae' : 'transparent')};
  svg { filter: ${p => (p.$off ? 'grayscale(.7) opacity(.38)' : 'none')}; }
`
const Caret = styled.div`
  flex: none;
  width: 12px;
  display: flex;
  justify-content: center;
  &::before {
    content: '';
    border-left: 4px solid transparent;
    border-right: 4px solid transparent;
    border-top: 5px solid ${p => (p.$off ? '#aaa' : '#444')};
  }
`
const Sep = styled.div`
  flex: none;
  width: 6.5px;
  height: 26px;
  display: flex;
  justify-content: center;
  &::before {
    content: '';
    width: 1px;
    background: #c8c8c8;
  }
`
const Spacer = styled.div`
  flex: 1;
`
const EndGap = styled.div`
  flex: none;
  width: 123px;
`
const SpinBox = styled.div`
  flex: none;
  width: 87px;
  height: 24px;
  margin-left: 1px;
  background: #f0f0f0;
  border: 1px solid #bbb;
  border-radius: 3px;
  display: flex;
  align-items: center;
  color: #888;
  padding-left: 4px;
  font-family: "Liberation Mono", monospace;
`
const SpinArrows = styled.div`
  margin-left: auto;
  width: 14px;
  height: 100%;
  border-left: 1px solid #bbb;
  display: flex;
  flex-direction: column;
  align-items: center;
  justify-content: space-evenly;
`
const Up = styled.i`
  border-left: 3.5px solid transparent;
  border-right: 3.5px solid transparent;
  border-bottom: 5px solid ${p => p.$c || '#888'};
`
const Down = styled.i`
  border-left: 3.5px solid transparent;
  border-right: 3.5px solid transparent;
  border-top: 5px solid ${p => p.$c || '#888'};
`
const ComboBox = styled.div`
  flex: none;
  width: 65px;
  height: 24px;
  margin-left: 2px;
  border: 1px solid #ccc;
  border-radius: 3px;
  background: #f3f3f3;
  color: #888;
  display: flex;
  align-items: center;
  justify-content: space-between;
  padding: 0 6px 0 4px;
`
const Main = styled.div`
  flex: 1;
  display: flex;
  min-height: 0;
  background: #efefef;
`
const LeftBar = styled.div`
  flex: none;
  width: 52px;
  border-right: 1px solid #c8c8c8;
  background: linear-gradient(90deg, #fbfbfb, #eeeeee);
  display: flex;
  flex-direction: column;
`
const LeftGrip = styled.div`
  height: 12px;
  display: flex;
  justify-content: center;
  align-items: flex-end;
  padding-right: 12px;
  &::before {
    content: '';
    width: 18px;
    height: 4px;
    border-top: 1px dotted #999;
    border-bottom: 1px dotted #999;
  }
`
const LeftItem = styled.div`
  height: 32px;
  display: flex;
  align-items: center;
  padding-left: 7px;
  gap: 1px;
`
const Dock = styled.div`
  flex: none;
  width: 260px;
  display: flex;
  flex-direction: column;
`
const RightDock = styled.div`
  flex: none;
  width: 471px;
  padding-left: 6px;
  display: flex;
  flex-direction: column;
`
const DockHead = styled.div`
  height: 21px;
  flex: none;
  display: flex;
  align-items: center;
  padding-left: ${p => p.$pad || 4}px;
`
const HeadBtns = styled.div`
  margin-left: auto;
  display: flex;
  gap: 1px;
  padding-right: 2px;
`
const HeadBtn = styled.div`
  width: 13px;
  height: 13px;
  border: 1px solid #777;
  border-radius: 3px;
  display: flex;
  align-items: center;
  justify-content: center;
  background: #eee;
`
const DockBar = styled.div`
  height: ${p => p.$h || 29}px;
  flex: none;
  display: flex;
  align-items: center;
  padding-left: 3px;
`
const MiniBtn = styled.div`
  flex: none;
  width: 25px;
  height: 24px;
  display: flex;
  align-items: center;
  justify-content: center;
  border-radius: 3px;
  background: ${p => (p.$on ? '#dcdcdc' : 'transparent')};
  border: 1px solid ${p => (p.$on ? '#aeaeae' : 'transparent')};
  svg { filter: ${p => (p.$off ? 'grayscale(.7) opacity(.45)' : 'none')}; }
`
const MiniSep = styled.div`
  width: 1px;
  height: 16px;
  background: #ccc;
  margin: 0 3px;
`
const TreeBox = styled.div`
  position: relative;
  flex: none;
  height: ${p => p.$h}px;
  margin-right: ${p => p.$mr ?? 1}px;
  background: #fff;
  border: 1px solid #bdbdbd;
  display: flex;
  overflow: hidden;
`
const TreeRows = styled.div`
  flex: 1;
  padding-top: ${p => p.$top ?? 1}px;
  overflow: hidden;
  min-width: 0;
`
const TreeRow = styled.div`
  height: 19px;
  display: flex;
  align-items: center;
  white-space: nowrap;
  background: ${p => (p.$sel ? '#0c7ad8' : 'transparent')};
  color: ${p => (p.$sel ? '#fff' : '#222')};
  padding-left: ${p => p.$indent || 0}px;
  max-width: ${p => (p.$sel ? '193px' : 'none')};
`
const Tw = styled.div`
  flex: none;
  width: 8px;
  margin: 0 ${p => p.$mr ?? 6}px 0 6px;
  display: flex;
  justify-content: center;
`
const TriRight = styled.i`
  border-top: 4px solid transparent;
  border-bottom: 4px solid transparent;
  border-left: 5px solid #333;
`
const TriDown = styled.i`
  border-left: 4px solid transparent;
  border-right: 4px solid transparent;
  border-top: 5px solid #111;
`
const RowLabel = styled.span`
  margin-left: 5px;
`
const VScroll = styled.div`
  flex: none;
  width: 14px;
  border-left: 1px solid #ddd;
  background: #f4f4f4;
  display: flex;
  flex-direction: column;
  align-items: center;
`
const ScrollEnd = styled.div`
  flex: none;
  height: 15px;
  width: 100%;
  background: #f7f7f7;
  display: flex;
  align-items: center;
  justify-content: center;
`
const Thumb = styled.div`
  width: 100%;
  flex: ${p => p.$flex};
  background: ${p => p.$c};
`
const CtxMenu = styled.div`
  position: absolute;
  left: 73px;
  top: 64px;
  width: 119px;
  height: 76px;
  background: #fff;
  border: 1px solid #c9c9c9;
  box-shadow: 2px 3px 4px rgba(0, 0, 0, .45);
  z-index: 3;
`
const CtxItem = styled.div`
  height: 25px;
  padding-left: 25px;
  display: flex;
  align-items: center;
  background: ${p => (p.$hot ? '#0a78d4' : 'transparent')};
  color: ${p => (p.$hot ? '#fff' : '#222')};
`
const Splitter = styled.div`
  flex: none;
  height: ${p => p.$h}px;
  display: flex;
  align-items: center;
  justify-content: center;
  &::before {
    content: '';
    width: 18px;
    height: 1px;
    border-top: 1px dotted #aaa;
  }
`
const BmBox = styled.div`
  flex: none;
  height: 103px;
  margin-right: 1px;
  background: #fff;
  border: 1px solid #bdbdbd;
  display: flex;
  flex-direction: column;
`
const TableHead = styled.div`
  height: 21px;
  flex: none;
  display: grid;
  grid-template-columns: 100px 100px 1fr;
  background: linear-gradient(#fff, #f1f1f1);
  border-bottom: 1px solid #c4c4c4;
`
const HeadCell = styled.div`
  border-right: 1px solid #d5d5d5;
  padding-left: 2px;
  display: flex;
  align-items: center;
  justify-content: space-between;
  padding-right: 4px;
  white-space: nowrap;
  overflow: hidden;
`
const TableBody = styled.div`
  flex: 1;
`
const HScroll = styled.div`
  flex: none;
  height: 14px;
  display: flex;
  align-items: center;
  border-top: 1px solid #ddd;
`
const HEnd = styled.div`
  flex: none;
  width: 14px;
  height: 100%;
  display: flex;
  align-items: center;
  justify-content: center;
  border: solid #ddd;
  border-width: 0 1px;
`
const TriLeft = styled.i`
  border-top: 4px solid transparent;
  border-bottom: 4px solid transparent;
  border-right: 5px solid #333;
`
const HThumb = styled.div`
  height: 100%;
  flex: ${p => p.$flex};
  background: ${p => p.$c};
`
const LayerBox = styled.div`
  flex: 1;
  margin: 1px 1px 1px 0;
  background: #fff;
  border: 1px solid #c4c4c4;
`
const Canvas = styled.div`
  flex: 1;
  margin: 1px 0 1px 5px;
  background: #fff;
  border: 1px solid #c4c4c4;
  display: flex;
  flex-direction: column;
`
const MsgBar = styled.div`
  height: 27px;
  flex: none;
  background: #ffc800;
  border-bottom: 1px solid #e3a900;
  display: flex;
  align-items: center;
  padding-left: 10px;
`
const MsgText = styled.span`
  margin-left: 11px;
  font-family: "Liberation Mono", "Noto Sans CJK SC", monospace;
  font-size: 10px;
  color: #111;
`
const MsgCjk = styled.span`
  font-family: "Noto Sans CJK SC", sans-serif;
  font-size: 12px;
`
const MsgRight = styled.div`
  margin-left: auto;
  display: flex;
  align-items: center;
  padding-right: 22px;
`
const StackBtn = styled.div`
  display: flex;
  flex-direction: column;
  gap: 1px;
  margin-right: 6px;
`
const StackBit = styled.div`
  width: 14px;
  height: 11px;
  background: #ffc800;
  border: 1px solid #888;
  border-top-color: #bbb;
  border-left-color: #bbb;
  display: flex;
  align-items: center;
  justify-content: center;
  &::before {
    content: '';
    width: 4px;
    height: 2px;
    background: #b88c00;
  }
`
const MsgBtn = styled.div`
  width: 80px;
  height: 20px;
  background: linear-gradient(#fff, #f2f2f2);
  border: 1px solid #aaa;
  border-radius: 2px;
  display: flex;
  align-items: center;
  justify-content: center;
  margin-right: 24px;
  font-size: 12.5px;
`
const Search = styled.div`
  flex: none;
  height: 21px;
  background: #fff;
  border: 1px solid #bdbdbd;
  border-radius: 3px;
  display: flex;
  align-items: center;
  color: #888;
  padding-left: 7px;
  gap: 8px;
`
const ToolSearch = styled(Search)`
  margin-top: 1px;
`
const ResultBox = styled.div`
  flex: ${p => (p.$fill ? 1 : 'none')};
  height: ${p => (p.$fill ? 'auto' : '252px')};
  background: #fff;
  border: 1px solid #c4c4c4;
  margin-bottom: ${p => (p.$fill ? 1 : 0)}px;
`
const StatusBar = styled.div`
  height: 28px;
  flex: none;
  display: flex;
  align-items: center;
  background: #efefef;
  padding-left: 4px;
  color: #333;
`
const StatusSearch = styled(Search)`
  width: 200px;
  font-family: "Liberation Mono", "Noto Sans CJK SC", monospace;
  font-size: 11px;
`
const StatusLabel = styled.span`
  margin-left: ${p => p.$ml || 0}px;
  font-size: 11px;
  white-space: nowrap;
  color: #333;
`
const Field = styled.div`
  flex: none;
  width: ${p => p.$w}px;
  height: 21px;
  margin-left: ${p => p.$ml ?? 3}px;
  background: #fff;
  border: 1px solid #bdbdbd;
  border-radius: 3px;
  display: flex;
  align-items: center;
  padding-left: 3px;
  font-family: "Liberation Mono", monospace;
  font-size: 10px;
  white-space: nowrap;
  overflow: hidden;
  color: #333;
`
const FieldEnd = styled.div`
  margin-left: auto;
  flex: none;
  width: 19px;
  height: 100%;
  border-left: 1px solid #ccc;
  display: flex;
  flex-direction: column;
  align-items: center;
  justify-content: space-evenly;
`
const StatusIcon = styled.div`
  flex: none;
  width: ${p => p.$w}px;
  display: flex;
  justify-content: center;
  margin-left: ${p => p.$ml || 0}px;
`
const Check = styled.div`
  flex: none;
  width: 14px;
  height: 14px;
  margin-left: 8px;
  background: #fff;
  border: 1px solid #777;
  display: flex;
  align-items: center;
  justify-content: center;
`
const Crs = styled.span`
  margin-left: 2px;
  font-family: "Liberation Mono", monospace;
  font-size: 10px;
  letter-spacing: -.1px;
  color: #333;
`
const TaskBar = styled.div`
  height: 40px;
  flex: none;
  display: flex;
  align-items: stretch;
  background: linear-gradient(90deg, #060a14, #0c1220 50%, #141c2c);
  position: relative;
`
const TaskBtn = styled.div`
  flex: none;
  width: ${p => p.$w || 48}px;
  margin-left: ${p => p.$ml || 0}px;
  display: flex;
  align-items: center;
  justify-content: center;
  background: ${p => (p.$on ? '#3b3c44' : 'transparent')};
  position: relative;
  ${p => p.$bar && `
    &::after {
      content: '';
      position: absolute;
      left: ${p.$on ? 0 : 4}px;
      right: ${p.$on ? 0 : 4}px;
      bottom: 0;
      height: 2px;
      background: #6fb3e4;
    }
  `}
`
const Tray = styled.div`
  margin-left: auto;
  display: flex;
  align-items: center;
  color: #fff;
  padding-right: 28px;
`
const TrayGlyph = styled.div`
  display: flex;
  margin-left: ${p => p.$ml}px;
`
const Clock = styled.div`
  display: flex;
  flex-direction: column;
  align-items: center;
  width: 72px;
  margin-left: 53px;
  margin-right: 11px;
  font-size: 12px;
  line-height: 19px;
`
const Watermark = styled.div`
  position: absolute;
  right: 16px;
  top: 9px;
  color: rgba(255, 255, 255, .5);
  font-size: 20px;
  line-height: 26px;
  white-space: nowrap;
  letter-spacing: -.3px;
`
const RedArrow = styled.svg`
  position: absolute;
  left: 0;
  top: 0;
  z-index: 5;
  pointer-events: none;
`

const menus = [['工程', 'J'], ['编辑', 'E'], ['视图', 'V'], ['图层', 'L'], ['设置', 'S'], ['插件', 'P'], ['矢量', 'O'], ['栅格', 'R'], ['数据库', 'D'], ['Web', 'W'], ['网孔', 'M'], ['数据处理', 'C'], ['帮助', 'H']]

const row1 = '| doc folder save layout:star props style | !hand ~panmap zoomin zoomout full ~zoomsel ~zoomlayer ~zoomone zoomlast ~zoomnext map:star map3d:star bookmark:star bookshow clock refresh | ~select v ~expr v deselect V yellowpin | identify ~abacus !gear sigma ~table v measure V tip ~gearcur v'
const row2 = '| addlayer:plus gpkg:star vnew:star feather:star chip:star mesh:star vtile:star | ~pencils ~pencil ~saveedit ~line v ~points:star ~nodetool v ~tableedit ~trash ~scissors ~copy ~paste ~undo ~redo | ~abc ~pie s labelpin labelred s ~abcpin ~abceye ~abcmove ~abcrot ~abcedit | db | globe:plus globe2:lens globedark | python | help |'
const row3 = '| ~ruler ~ptsmove v ~blobrot ~blobmove ~hex ~ringhole:star ~twoblob:star ~ringhole:star ~ringhole:plus ~twoblob:plus ~blob ~blobfill ~vrot ~split ~sciss ~sciss ~scissline ~merge ~rotcirc v | ~hist ~hist2 ~hist ~hist2 ~sunup ~sundown ~contup ~contdown ~gamup ~gamdown'
const row3r = '| magnet ~snap:tri'
const row3e = 'trace tracefill:tri ~cross ~crossfill v ~nodeline'
const row4 = '| ~curve:star v ~circ:star v ~ell:star v ~rect:star v ~poly:star v | ~meshedit ~meshsel v ~meshexpr ~tin v | label:star V cursorbox polyadd:plus lineadd:plus staradd:plus textadd:plus s callout V'

const Tools = ({ spec }) =>
  spec.split(' ').map((t, i) => {
    if (t === '|') return <Grip key={i} />
    if (t === 'v') return <Caret key={i} $off />
    if (t === 'V') return <Caret key={i} />
    if (t === 's') return <Sep key={i} />
    const off = t[0] === '~'
    const on = t[0] === '!'
    const [n, b] = t.replace(/^[~!]/, '').split(':')
    return (
      <Btn key={i} $off={off} $on={on}>
        <Ico n={n} b={b} />
      </Btn>
    )
  })

const MiniTools = ({ spec }) =>
  spec.split(' ').map((t, i) => {
    if (t === 'v') return <Caret key={i} $off />
    if (t === 's') return <MiniSep key={i} />
    const off = t[0] === '~'
    const on = t[0] === '!'
    const [n, b] = t.replace(/^[~!]/, '').split(':')
    return (
      <MiniBtn key={i} $off={off} $on={on}>
        <Ico n={n} b={b} size={19} />
      </MiniBtn>
    )
  })

const DockTitle = ({ pad, children }) => (
  <DockHead $pad={pad}>
    {children}
    <HeadBtns>
      <HeadBtn>
        <svg width="9" height="9" viewBox="0 0 9 9" fill="none" stroke="#555"><rect x="3" y=".5" width="5" height="5" /><rect x=".5" y="3" width="5" height="5" fill="#eee" /></svg>
      </HeadBtn>
      <HeadBtn>
        <svg width="9" height="9" viewBox="0 0 9 9" stroke="#333" strokeWidth="1.800"><path d="M1 1l7 7M8 1L1 8" /></svg>
      </HeadBtn>
    </HeadBtns>
  </DockHead>
)

const Glass = () => (
  <svg width="13" height="13" viewBox="0 0 13 13" fill="none" stroke="#888" strokeWidth="1.300"><circle cx="5.500" cy="5.500" r="4" /><path d="M8.500 8.500l4 4" /></svg>
)

const browserRows = [
  { t: 'Oracle', i: 'oracle' }, { t: 'WMS/WMTS', i: 'wmsglobe' }, { t: 'Vector Tiles', i: 'tiles' },
  { t: 'XYZ Tiles', i: 'xyz', sel: true }, { t: 'Mapbox', i: 'xyz', kid: true }, { t: 'OpenStreetMap', i: 'xyz', kid: true },
  { t: 'OSM', i: 'xyz', kid: true }, { t: '高德', i: 'xyz', kid: true }, { t: 'WCS', i: 'wmsglobe' },
]
const toolboxRows = ['插值', '矢量创建', '矢量叠加', '矢量分析', '矢量几何图形', '矢量属性表', '矢量通用', '矢量瓦片', '矢量选择集', '图表', '图层工具']
const leftBar = [['vnew', 'plus'], ['raster', 'plus'], ['mesh', 'plus'], ['comma', 'plus'], ['feather', 'plus'], ['vtile', 'plus'], ['pg', 'plus', 1], ['globe', 'plus'], ['globegrid', 'plus'], ['wfs', 'plus'], ['vnew', 'star', 1]]

export default function App() {
  return (
    <Shell>
      <Global />
      <TitleBar>
        <Qgis />
        <TitleText>*未命名的工程 — QGIS</TitleText>
        <WinBtns>
          <WinBtn><svg width="11" height="11" viewBox="0 0 11 11" stroke="#222"><path d="M0 5.500h11" /></svg></WinBtn>
          <WinBtn><svg width="11" height="11" viewBox="0 0 11 11" fill="none" stroke="#222"><rect x=".5" y="2.500" width="8" height="8" /><path d="M2.500 2.500v-2h8v8h-2" /></svg></WinBtn>
          <WinBtn><svg width="12" height="12" viewBox="0 0 12 12" stroke="#222"><path d="M.5.5l11 11M11.500.5l-11 11" /></svg></WinBtn>
        </WinBtns>
      </TitleBar>
      <MenuBar>
        {menus.map(([name, key]) => (
          <MenuItem key={key}>{name}(<u>{key}</u>)</MenuItem>
        ))}
      </MenuBar>
      <Row><Tools spec={row1} /></Row>
      <Row><Tools spec={row2} /></Row>
      <Row>
        <Tools spec={row3} />
        <Spacer />
        <Tools spec={row3r} />
        <Btn $on><Ico n="snapdots" b="tri" /></Btn>
        <SpinBox>12<SpinArrows><Up /><Down /></SpinArrows></SpinBox>
        <ComboBox>像素<Down /></ComboBox>
        <Tools spec={row3e} />
        <EndGap />
      </Row>
      <Row $h={38}><Tools spec={row4} /></Row>

      <Main>
        <LeftBar>
          <LeftGrip />
          {leftBar.map(([n, b, more], i) => (
            <LeftItem key={i}>
              <Ico n={n} b={b} />
              {more && <Caret />}
            </LeftItem>
          ))}
        </LeftBar>

        <Dock>
          <DockTitle>浏览器 (2)</DockTitle>
          <DockBar $h={30}><MiniTools spec="boxadd refresh funnel collapse info" /></DockBar>
          <TreeBox $h={157}>
            <TreeRows>
              {browserRows.map(r => (
                <TreeRow key={r.t} $sel={r.sel} $indent={r.kid ? 35 : 0}>
                  {!r.kid && <Tw>{r.sel && <TriDown />}</Tw>}
                  <Ico n={r.i} size={16} />
                  <RowLabel>{r.t}</RowLabel>
                </TreeRow>
              ))}
            </TreeRows>
            <VScroll>
              <ScrollEnd><Up $c="#333" /></ScrollEnd>
              <Thumb $flex="60" $c="#dedede" />
              <Thumb $flex="48" $c="#f7f7f7" />
              <Thumb $flex="26" $c="#e8e8e8" />
              <ScrollEnd><Down $c="#333" /></ScrollEnd>
            </VScroll>
            <CtxMenu>
              <CtxItem $hot>新建连接...</CtxItem>
              <CtxItem>保存连接...</CtxItem>
              <CtxItem>加载连接...</CtxItem>
            </CtxMenu>
          </TreeBox>
          <Splitter $h={8} />
          <DockTitle>空间书签管理器</DockTitle>
          <DockBar $h={30}><MiniTools spec="lensbm bookmark:star trashred share" /></DockBar>
          <BmBox>
            <TableHead>
              <HeadCell>名称<Up $c="#444" /></HeadCell>
              <HeadCell>组</HeadCell>
              <HeadCell>横坐标最小</HeadCell>
            </TableHead>
            <TableBody />
            <HScroll>
              <HEnd><TriLeft /></HEnd>
              <HThumb $flex="74" $c="#fafafa" />
              <HThumb $flex="157" $c="#e4e4e4" />
              <HEnd><TriRight /></HEnd>
            </HScroll>
          </BmBox>
          <Splitter $h={6} />
          <DockTitle>图层</DockTitle>
          <DockBar><MiniTools spec="broom clip eye:tri funnel:tri ~exprtooth v expand collapse boxminus" /></DockBar>
          <LayerBox />
        </Dock>

        <Canvas>
          <MsgBar>
            <svg width="23" height="21" viewBox="0 0 23 21">
              <path d="M11.500 1l11 19H.5z" fill="#ffc800" stroke="#c76a00" strokeWidth="1.400" strokeLinejoin="round" />
              <path d="M10.300 6h2.400l-.5 8h-1.400z" fill="#a83c00" />
              <circle cx="11.500" cy="16.500" r="1.300" fill="#a83c00" />
            </svg>
            <MsgText>Open Sans <MsgCjk>字体安装失败</MsgCjk></MsgText>
            <MsgRight>
              <StackBtn><StackBit /><StackBit /></StackBtn>
              <MsgBtn>查看错误</MsgBtn>
              <svg width="18" height="18" viewBox="0 0 18 18">
                <circle cx="9" cy="9" r="8.500" fill="#3a2e0a" />
                <path d="M5.500 5.500l7 7M12.500 5.500l-7 7" stroke="#fff" strokeWidth="2.400" />
              </svg>
            </MsgRight>
          </MsgBar>
        </Canvas>

        <RightDock>
          <DockTitle>工具箱</DockTitle>
          <DockBar $h={30}>
            <MiniTools spec="gears:tri python:tri clock !tbdoc s ~editoff s wrench" />
          </DockBar>
          <ToolSearch><Glass />搜索...</ToolSearch>
          <TreeBox $h={204} $mr={0}>
            <TreeRows $top={0}>
              {toolboxRows.map(t => (
                <TreeRow key={t}>
                  <Tw $mr={9}><TriRight /></Tw>
                  <Qgis size={16} />
                  <RowLabel>{t}</RowLabel>
                </TreeRow>
              ))}
            </TreeRows>
            <VScroll>
              <ScrollEnd><Up $c="#333" /></ScrollEnd>
              <Thumb $flex="72" $c="#f7f7f7" />
              <Thumb $flex="102" $c="#dedede" />
              <ScrollEnd><Down $c="#333" /></ScrollEnd>
            </VScroll>
          </TreeBox>
          <Splitter $h={4} />
          <DockTitle pad={3}>结果查看器</DockTitle>
          <ResultBox />
          <Splitter $h={5} />
          <ResultBox $fill />
        </RightDock>
      </Main>

      <StatusBar>
        <StatusSearch><Glass />搜索 (Ctrl+K)</StatusSearch>
        <StatusLabel $ml={931}>坐标</StatusLabel>
        <Field $w={122}>-55423338, 26212240</Field>
        <StatusIcon $w={26}>
          <svg width="16" height="20" viewBox="0 0 16 20" fill="none" stroke="#333" strokeWidth="1.400"><ellipse cx="8" cy="10" rx="4" ry="8" transform="rotate(-25 8 10)" /><ellipse cx="8" cy="10" rx="4" ry="8" transform="rotate(25 8 10)" /><path d="M3 3l10 14" /></svg>
        </StatusIcon>
        <StatusLabel $ml={9}>比例</StatusLabel>
        <Field $w={82}>:419787648<FieldEnd><Down $c="#555" /></FieldEnd></Field>
        <StatusIcon $w={34}>
          <svg width="13" height="18" viewBox="0 0 13 18"><path d="M3 8V5a3.500 3.500 0 0 1 7 0v3" fill="none" stroke="#666" strokeWidth="1.800" /><rect x="1" y="8" width="11" height="10" rx="1" fill="#666" /></svg>
        </StatusIcon>
        <StatusLabel>放大镜</StatusLabel>
        <Field $w={88} $ml={5}>100%<FieldEnd><Up $c="#555" /><Down $c="#555" /></FieldEnd></Field>
        <StatusLabel $ml={9}>旋转角度</StatusLabel>
        <Field $w={88} $ml={9}>0. 0°<FieldEnd><Up $c="#555" /><Down $c="#555" /></FieldEnd></Field>
        <Check><svg width="11" height="11" viewBox="0 0 11 11" fill="none" stroke="#111" strokeWidth="1.800"><path d="M2 5l3 5 4-9" /></svg></Check>
        <StatusLabel $ml={5}>渲染</StatusLabel>
        <StatusIcon $w={17} $ml={15}>
          <svg width="15" height="15" viewBox="0 0 24 24"><Globe c="#999" /></svg>
        </StatusIcon>
        <Crs>EPSG:3857</Crs>
        <StatusIcon $w={20} $ml={27}>
          <svg width="17" height="17" viewBox="0 0 17 17" fill="#555"><path d="M8.500 1C13 1 16 3.500 16 7.500S13 14 8.500 14H7l-3 3v-3.800C2 12 1 10 1 7.500 1 3.500 4 1 8.500 1z" /><g fill="#eee"><circle cx="5" cy="7.500" r="1" /><circle cx="8.500" cy="7.500" r="1" /><circle cx="12" cy="7.500" r="1" /></g></svg>
        </StatusIcon>
      </StatusBar>

      <TaskBar>
        <TaskBtn>
          <svg width="16" height="16" viewBox="0 0 16 16" fill="#fff"><path d="M0 2.300L6.500 1.400v6.200H0zM7.300 1.300L16 0v7.600H7.300zM0 8.400h6.500v6.200L0 13.700zM7.300 8.400H16V16l-8.700-1.300z" /></svg>
        </TaskBtn>
        <TaskBtn>
          <svg width="18" height="18" viewBox="0 0 18 18" fill="none" stroke="#fff" strokeWidth="1.300"><circle cx="11" cy="7" r="5.500" /><path d="M7 11l-6 6" /></svg>
        </TaskBtn>
        <TaskBtn>
          <svg width="17" height="16" viewBox="0 0 17 16" fill="none" stroke="#fff" strokeWidth="1.200"><path d="M1 1h9M1 15h9" /><rect x="1" y="4" width="10" height="8" /><rect x="14" y="1" width="2" height="2" fill="#fff" /><rect x="14" y="6.500" width="2" height="3" fill="#fff" /></svg>
        </TaskBtn>
        <TaskBtn $w={48} $ml={3} $bar>
          <svg width="26" height="26" viewBox="0 0 26 26">
            <circle cx="13" cy="13" r="12.500" fill="#0c62a8" />
            <path d="M1 12C2 5 8 .5 14 .5c6 0 11 4.500 11.500 10.500.2 3-2.500 5-6 5-2 0-3.500-.6-3.500-1.500 1-1 1-3-.5-4.500-2-2.500-6-3-9 0-2 2-3.500 2-5.500 1.500z" fill="#36c88c" />
            <path d="M8 15c1-4 6-5 8-2 .8 1-.5 2 .5 3 2.500 2 5 1 7 0-1.500 5-6 8.500-11 8.500-4 0-5.500-4-4.500-9.500z" fill="#1f9ade" />
          </svg>
        </TaskBtn>
        <TaskBtn $w={49} $bar>
          <svg width="24" height="20" viewBox="0 0 24 20">
            <path d="M1 2h8l2 2h12v16H1z" fill="#f0c254" />
            <rect x="1" y="6" width="22" height="13" fill="#ffe08a" />
            <rect x="7" y="11" width="10" height="9" fill="#3a9bdc" />
            <rect x="10" y="15" width="4" height="5" fill="#ffe08a" />
          </svg>
        </TaskBtn>
        <TaskBtn $w={49} $bar>
          <svg width="26" height="22" viewBox="0 0 26 22">
            <ellipse cx="10" cy="9" rx="9.500" ry="8.500" fill="#4cc94c" />
            <path d="M4 14l-1 5 5-3z" fill="#4cc94c" />
            <ellipse cx="18" cy="14" rx="7.500" ry="6.500" fill="#e8e8e8" />
            <circle cx="7" cy="7" r="1.200" fill="#1a5a1a" />
            <circle cx="13" cy="7" r="1.200" fill="#1a5a1a" />
            <circle cx="15.500" cy="13" r="1" fill="#666" />
            <circle cx="20.500" cy="13" r="1" fill="#666" />
          </svg>
        </TaskBtn>
        <TaskBtn $w={48} $ml={1} $bar $on>
          <Qgis size={26} />
        </TaskBtn>
        <Tray>
          <svg width="18" height="18" viewBox="0 0 18 18" fill="none" stroke="#fff" strokeWidth="1.100"><circle cx="7" cy="8" r="2.500" /><path d="M2 16c0-3 2-4.500 5-4.500s5 1.500 5 4.500" /><circle cx="12.500" cy="4" r="2.500" /></svg>
          <TrayGlyph $ml={21}><svg width="12" height="8" viewBox="0 0 12 8" fill="none" stroke="#fff"><path d="M1 7l5-6 5 6" /></svg></TrayGlyph>
          <TrayGlyph $ml={10}><svg width="14" height="14" viewBox="0 0 14 14" fill="none" stroke="#fff"><rect x="1.500" y="2.500" width="11" height="8" /><path d="M5 12.500h4" /></svg></TrayGlyph>
          <Clock>
            <span>14:26</span>
            <span>2023/7/26</span>
          </Clock>
          <svg width="14" height="14" viewBox="0 0 14 14" fill="none" stroke="#fff"><path d="M1.500 1.500h11v8h-4l-3 3v-3h-4z" /></svg>
        </Tray>
        <Watermark>CSDN @小鱼&amp;爱吃糖</Watermark>
      </TaskBar>

      <RedArrow width="320" height="340" viewBox="0 0 320 340">
        <path d="M300 255L246 315l5 5-22 7 6-23 5 5z" fill="#f5221c" />
      </RedArrow>
    </Shell>
  )
}
